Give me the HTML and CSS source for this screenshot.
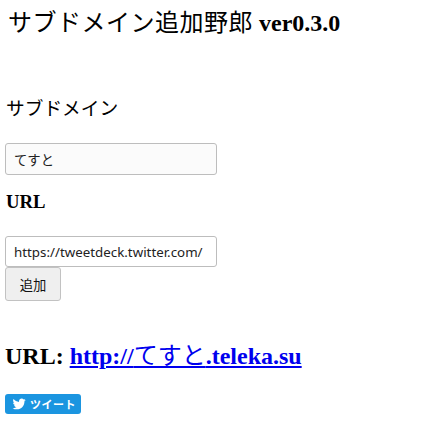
FILE: index.html
```html
<!DOCTYPE html>
<html lang="ja">
<head>
<meta charset="utf-8">
<title>サブドメイン追加野郎</title>
<link rel="stylesheet" href="styles.css">
</head>
<body>
<h2 class="title"><span class="jp">サブドメイン追加野郎</span> ver0.3.0</h2>
<form class="form">
  <h3 class="label label-first"><span class="jp">サブドメイン</span></h3>
  <input class="field field-sub" type="text" value="てすと">
  <h3 class="label">URL</h3>
  <input class="field field-url" type="text" value="https://tweetdeck.twitter.com/">
  <button class="add" type="button">追加</button>
</form>
<h2 class="result">URL: <a class="link" href="#">http://<span class="jp">てすと</span>.teleka.su</a></h2>
<a class="tweet" href="#"><svg class="bird" viewBox="0 0 24 24" aria-hidden="true"><path fill="#fff" d="M23.643 4.937c-.835.37-1.732.62-2.675.733.962-.576 1.7-1.49 2.048-2.578-.9.534-1.897.922-2.958 1.13-.85-.904-2.06-1.470-3.4-1.470-2.572 0-4.658 2.086-4.658 4.660 0 .364.042.718.12 1.060-3.873-.195-7.304-2.050-9.602-4.868-.4.690-.63 1.490-.63 2.342 0 1.616.823 3.043 2.072 3.878-.764-.025-1.482-.234-2.110-.583v.060c0 2.257 1.605 4.140 3.737 4.568-.392.106-.803.162-1.227.162-.3 0-.593-.028-.877-.082.593 1.850 2.313 3.198 4.352 3.234-1.595 1.250-3.604 1.995-5.786 1.995-.376 0-.747-.022-1.112-.065 2.062 1.323 4.510 2.093 7.140 2.093 8.570 0 13.255-7.098 13.255-13.254 0-.2-.005-.402-.014-.602.910-.658 1.700-1.477 2.323-2.410z"/></svg><span class="tweet-text">ツイート</span></a>
</body>
</html>
```
FILE: styles.css
```css
html, body {
  background: #ffffff;
}
body {
  margin: 0;
  padding: 0 5px;
  font-family: "Liberation Serif", "Noto Sans CJK JP", serif;
  color: #000;
}
.jp {
  font-weight: normal;
}
.title {
  font-size: 24px;
  line-height: 28px;
  font-weight: bold;
  margin: 9px 0 0;
  padding-left: 3px;
}
.title .jp {
  letter-spacing: 0.5px;
}
.form {
  display: flex;
  flex-direction: column;
  align-items: flex-start;
  margin: 0;
}
.label {
  font-size: 18.72px;
  line-height: 22px;
  font-weight: bold;
  margin: 16px 0 23px;
  padding-left: 1px;
}
.label-first {
  margin-top: 61px;
}
.field {
  box-sizing: border-box;
  width: 212px;
  height: 31px;
  margin: 0;
  padding: 0 8px;
  border: 1px solid #bdbdbd;
  border-radius: 3px;
  font-family: "Noto Sans", "Noto Sans CJK JP", sans-serif;
  font-size: 13.33px;
  color: #222;
  background: #ffffff;
  outline: none;
}
.field-sub {
  height: 32px;
  background: #fbfbfb;
}
.add {
  box-sizing: border-box;
  width: 56px;
  height: 34px;
  margin: 0;
  padding: 0;
  border: 1px solid #c2c2c2;
  border-radius: 3px;
  background: #efefef;
  font-family: "Noto Sans CJK JP", sans-serif;
  font-size: 13.33px;
  color: #111;
}
.result {
  font-size: 24px;
  line-height: 28px;
  font-weight: bold;
  margin: 41px 0 0;
}
.link {
  color: #0000ee;
  text-decoration: underline;
}
.tweet {
  display: inline-flex;
  align-items: center;
  box-sizing: border-box;
  width: 76px;
  height: 20px;
  margin-top: 24px;
  padding: 0 0 0 7px;
  gap: 4px;
  background: #1b95e0;
  border-radius: 3px;
  text-decoration: none;
  color: #fff;
}
.bird {
  width: 14px;
  height: 14px;
  display: block;
}
.tweet-text {
  font-family: "Noto Sans CJK JP", sans-serif;
  font-size: 11px;
  font-weight: bold;
  line-height: 20px;
  letter-spacing: 0.5px;
}
```
